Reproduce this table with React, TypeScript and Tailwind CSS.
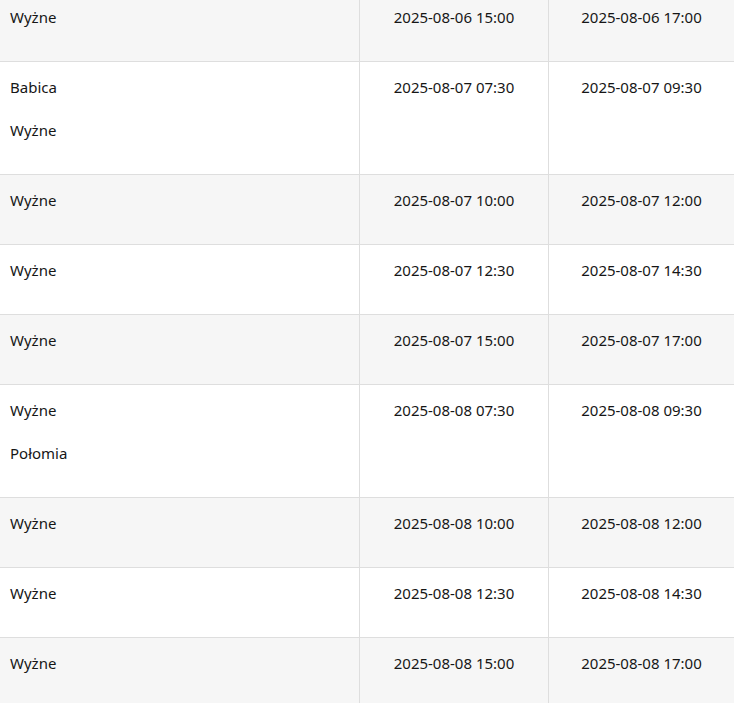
const rows: { places: string[]; start: string; end: string }[] = [
  { places: ["Wyżne"], start: "2025-08-06 15:00", end: "2025-08-06 17:00" },
  { places: ["Babica", "Wyżne"], start: "2025-08-07 07:30", end: "2025-08-07 09:30" },
  { places: ["Wyżne"], start: "2025-08-07 10:00", end: "2025-08-07 12:00" },
  { places: ["Wyżne"], start: "2025-08-07 12:30", end: "2025-08-07 14:30" },
  { places: ["Wyżne"], start: "2025-08-07 15:00", end: "2025-08-07 17:00" },
  { places: ["Wyżne", "Połomia"], start: "2025-08-08 07:30", end: "2025-08-08 09:30" },
  { places: ["Wyżne"], start: "2025-08-08 10:00", end: "2025-08-08 12:00" },
  { places: ["Wyżne"], start: "2025-08-08 12:30", end: "2025-08-08 14:30" },
  { places: ["Wyżne"], start: "2025-08-08 15:00", end: "2025-08-08 17:00" },
];

export default function App() {
  return (
    <div
      className="h-[703px] overflow-hidden bg-white text-[15px] leading-[20px] text-[#161616]"
      style={{ fontFamily: '"Noto Sans", "Open Sans", sans-serif' }}
    >
      <div className="-mt-[8px]">
        {rows.map((row, i) => (
          <div
            key={i}
            className={`flex border-b border-[#dedede] ${i % 2 === 0 ? "bg-[#f6f6f6]" : "bg-white"}`}
          >
            <div className="w-[360px] border-r border-[#dedede] px-[10px] pt-[15px] pb-[34px]">
              <div className="flex flex-col gap-[23px]">
                {row.places.map((p) => (
                  <div key={p}>{p}</div>
                ))}
              </div>
            </div>
            <div className="w-[189px] border-r border-[#dedede] pt-[15px] text-center">{row.start}</div>
            <div className="flex-1 pt-[15px] text-center">{row.end}</div>
          </div>
        ))}
      </div>
    </div>
  );
}
